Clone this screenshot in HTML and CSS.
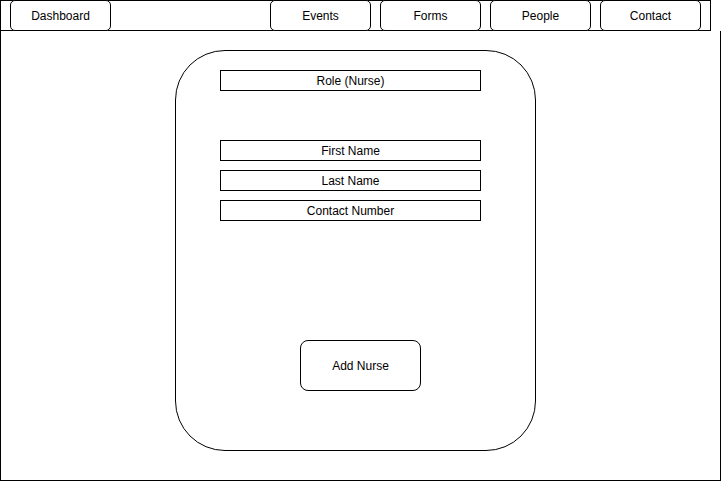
FILE: index.html
```html
<!DOCTYPE html>
<html lang="en">
<head>
    <meta charset="UTF-8">
    <meta name="viewport" content="width=device-width, initial-scale=1.0">
    <title>Add Nurse</title>
    <link rel="stylesheet" href="styles.css">
</head>
<body>
    <div class="frame">
        <div class="topbar">
            <div class="nav-btn">Dashboard</div>
            <div class="nav-group">
                <div class="nav-btn">Events</div>
                <div class="nav-btn">Forms</div>
                <div class="nav-btn">People</div>
                <div class="nav-btn">Contact</div>
            </div>
        </div>
        <div class="main">
            <div class="card">
                <div class="field">Role (Nurse)</div>
                <div class="field first">First Name</div>
                <div class="field">Last Name</div>
                <div class="field">Contact Number</div>
                <div class="add-btn">Add Nurse</div>
            </div>
        </div>
    </div>
</body>
</html>
```

FILE: styles.css
```css
body {
    margin: 0;
    background: #fff;
    color: #000;
    font-family: "Liberation Sans", Arial, sans-serif;
    font-size: 12px;
}

.frame {
    width: 721px;
    height: 481px;
}

.topbar {
    box-sizing: border-box;
    width: 711px;
    height: 31px;
    border: 1px solid #000;
    display: flex;
    align-items: flex-start;
    padding: 0 9px;
}

.nav-group {
    display: flex;
    gap: 9px;
    margin-left: auto;
}

.nav-btn {
    box-sizing: border-box;
    width: 101px;
    height: 31px;
    margin-top: -1px;
    border: 1px solid #000;
    border-radius: 5px;
    background: #fff;
    text-align: center;
    line-height: 31px;
}

.main {
    box-sizing: border-box;
    width: 721px;
    height: 450px;
    border: 1px solid #000;
    border-top: none;
    padding: 19px 0 0 174px;
}

.card {
    box-sizing: border-box;
    width: 361px;
    height: 401px;
    border: 1px solid #000;
    border-radius: 50px;
    padding: 19px 0 0 44px;
}

.field {
    box-sizing: border-box;
    width: 261px;
    height: 21px;
    border: 1px solid #000;
    text-align: center;
    line-height: 20px;
    margin-bottom: 9px;
}

.field.first {
    margin-top: 49px;
}

.add-btn {
    box-sizing: border-box;
    width: 121px;
    height: 51px;
    margin: 119px 0 0 80px;
    border: 1px solid #000;
    border-radius: 8px;
    text-align: center;
    line-height: 51px;
}
```
